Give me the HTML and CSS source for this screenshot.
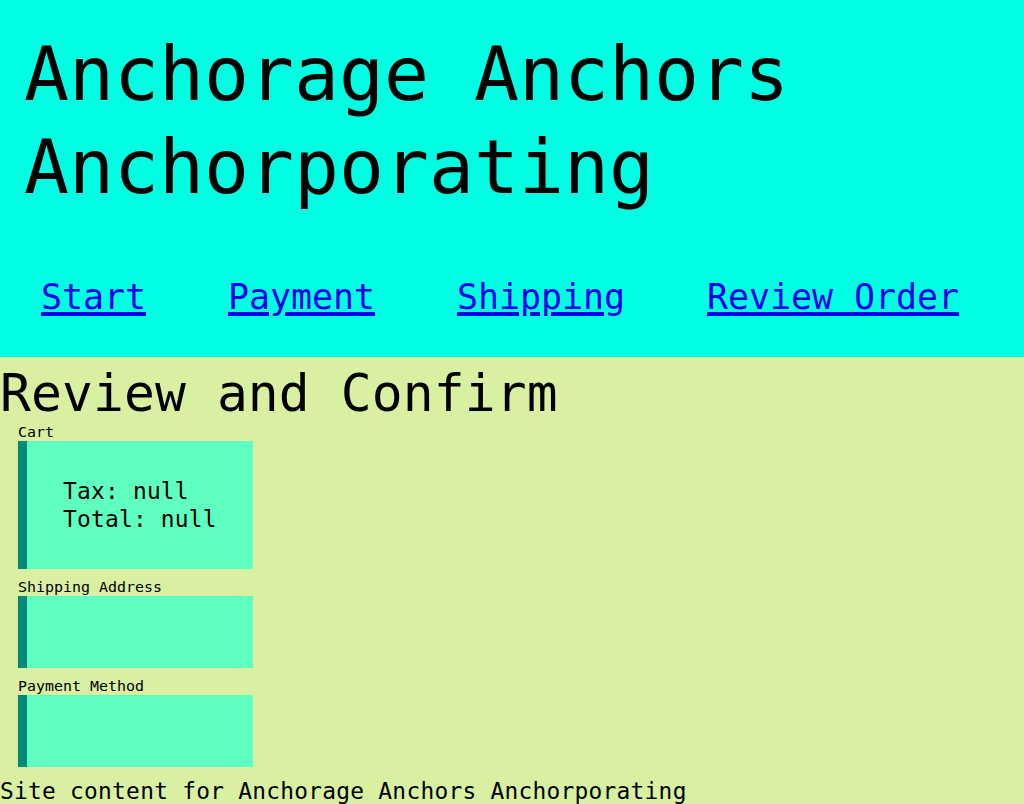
FILE: index.html
```html
<!DOCTYPE html>
<html lang="en">
<head>
<meta charset="utf-8">
<title>Anchorage Anchors Anchorporating</title>
<link rel="stylesheet" href="styles.css">
</head>
<body>
<header class="site-header">
  <h1 class="site-title">Anchorage Anchors Anchorporating</h1>
  <nav class="site-nav">
    <a href="#">Start</a>
    <a href="#">Payment</a>
    <a href="#">Shipping</a>
    <a href="#">Review Order</a>
  </nav>
</header>
<main class="content">
  <h2 class="page-title">Review and Confirm</h2>
  <div class="groups">
    <section class="group">
      <div class="group-label">Cart</div>
      <div class="card">
        <div class="line">Tax: null</div>
        <div class="line">Total: null</div>
      </div>
    </section>
    <section class="group">
      <div class="group-label">Shipping Address</div>
      <div class="card"></div>
    </section>
    <section class="group">
      <div class="group-label">Payment Method</div>
      <div class="card"></div>
    </section>
  </div>
  <footer class="site-footer">Site content for Anchorage Anchors Anchorporating</footer>
</main>
</body>
</html>
```

FILE: styles.css
```css
html, body {
  margin: 0;
  padding: 0;
}

body {
  font-family: "DejaVu Sans Mono", "Liberation Mono", monospace;
  color: #000;
  background: #d9f0a3;
}

.site-header {
  background: #00ffe2;
  height: 357px;
  box-sizing: border-box;
  padding-top: 28px;
}

.site-title {
  margin: 0;
  padding-left: 24px;
  font-size: 74.75px;
  font-weight: normal;
  line-height: 93px;
}

.site-nav {
  display: flex;
  gap: 82px;
  padding-left: 41px;
  margin-top: 61px;
  font-size: 34.88px;
  line-height: 44px;
}

.site-nav a {
  color: #0000ee;
  text-decoration: underline;
  text-decoration-thickness: 4px;
  text-underline-offset: 3px;
}

.content {
  padding-top: 7px;
}

.page-title {
  margin: 0;
  font-size: 51.3px;
  font-weight: normal;
  line-height: 59px;
  letter-spacing: 0.1px;
}

.groups {
  display: flex;
  flex-direction: column;
  gap: 9px;
  padding-left: 18px;
}

.group-label {
  font-size: 14.95px;
  line-height: 18px;
}

.card {
  width: 235px;
  min-height: 72px;
  box-sizing: border-box;
  padding: 36px;
  background: #5fffc0;
  border-left: 9px solid #00897b;
  font-size: 22.9px;
  line-height: 28px;
  letter-spacing: 0.2px;
}

.site-footer {
  margin-top: 11px;
  font-size: 22.85px;
  line-height: 27px;
  letter-spacing: 0.26px;
  white-space: nowrap;
}
```
